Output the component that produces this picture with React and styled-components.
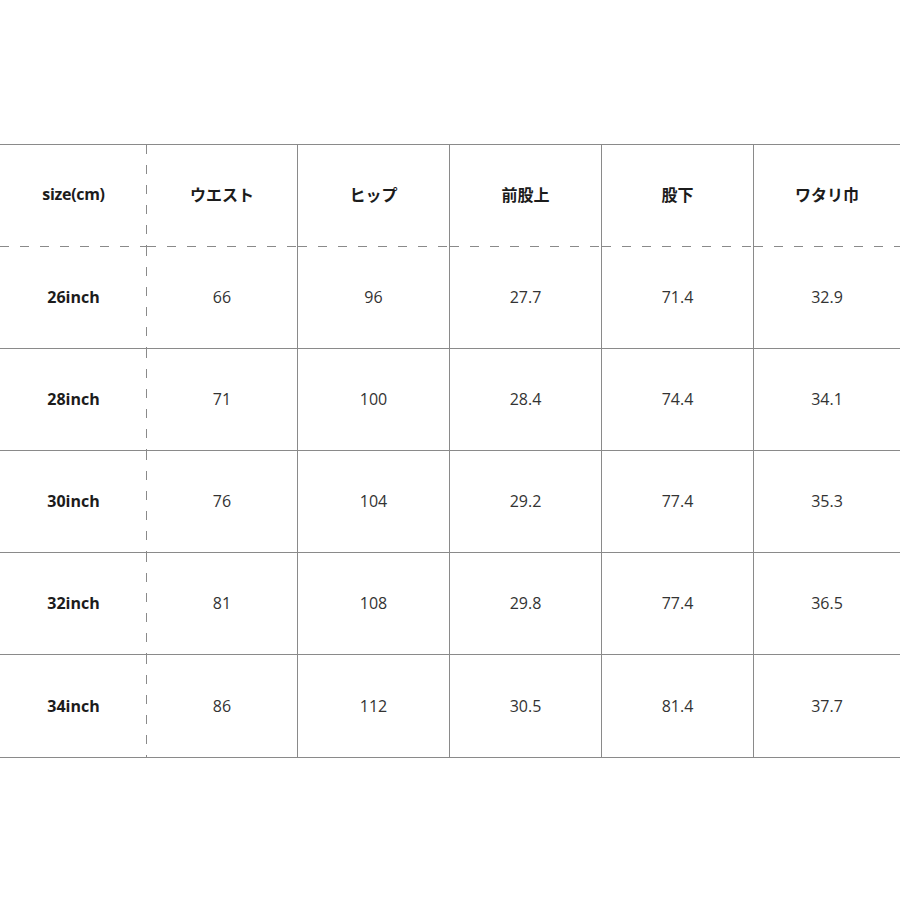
import React from "react"
import styled, { createGlobalStyle } from "styled-components"

const GlobalStyle = createGlobalStyle`
  html, body {
    margin: 0;
    padding: 0;
    background: #fff;
  }
  body {
    font-family: "Open Sans", "Noto Sans CJK JP", sans-serif;
    color: #2a2a2a;
  }
`

const headers = ["size(cm)", "ウエスト", "ヒップ", "前股上", "股下", "ワタリ巾"]

const rows = [
  ["26inch", "66", "96", "27.7", "71.4", "32.9"],
  ["28inch", "71", "100", "28.4", "74.4", "34.1"],
  ["30inch", "76", "104", "29.2", "77.4", "35.3"],
  ["32inch", "81", "108", "29.8", "77.4", "36.5"],
  ["34inch", "86", "112", "30.5", "81.4", "37.7"],
]

const line = "#8a8a8a"
const dashV = `repeating-linear-gradient(to bottom, ${line} 0 9px, transparent 9px 20px) right top / 1px 100% no-repeat`
const dashH = `repeating-linear-gradient(to right, ${line} 0 9px, transparent 9px 20px) left bottom / 100% 1px no-repeat`

const Page = styled.div`
  width: 900px;
  height: 900px;
  padding-top: 144px;
  box-sizing: border-box;
`

const Table = styled.div`
  display: grid;
  grid-template-columns: 147px 151px 152px 152px 152px 146px;
  grid-auto-rows: 102px;
  border-top: 1px solid ${line};
  border-bottom: 1px solid ${line};
`

const Cell = styled.div`
  display: flex;
  align-items: center;
  justify-content: center;
  box-sizing: border-box;
  padding-bottom: ${({ $head }) => ($head ? "4px" : "1px")};
  font-family: ${({ $head }) =>
    $head ? `"Noto Sans CJK JP", "Open Sans", sans-serif` : `"Open Sans", "Noto Sans CJK JP", sans-serif`};
  font-size: 16px;
  font-weight: ${({ $bold }) => ($bold ? 700 : 400)};
  color: ${({ $bold }) => ($bold ? "#1c1c1c" : "#333")};
  border-right: ${({ $col }) => ($col > 0 && $col < 5 ? `1px solid ${line}` : "none")};
  border-bottom: ${({ $row, $last }) => (!$last && $row > 0 ? `1px solid ${line}` : "none")};
  background: ${({ $col, $row }) =>
    [$col === 0 ? dashV : null, $row === 0 ? dashH : null].filter(Boolean).join(", ") || "none"};
`

const SizeLabel = styled.span`
  font-family: "Open Sans", sans-serif;
  font-size: 16px;
  font-weight: 700;
  letter-spacing: -0.3px;
`

export default function App() {
  return (
    <>
      <GlobalStyle />
      <Page>
        <Table>
          {headers.map((h, c) => (
            <Cell key={h} $head $bold $col={c} $row={0}>
              {c === 0 ? <SizeLabel>{h}</SizeLabel> : h}
            </Cell>
          ))}
          {rows.map((r, ri) =>
            r.map((v, c) => (
              <Cell
                key={`${ri}-${c}`}
                $bold={c === 0}
                $col={c}
                $row={ri + 1}
                $last={ri === rows.length - 1}
              >
                {v}
              </Cell>
            ))
          )}
        </Table>
      </Page>
    </>
  )
}
